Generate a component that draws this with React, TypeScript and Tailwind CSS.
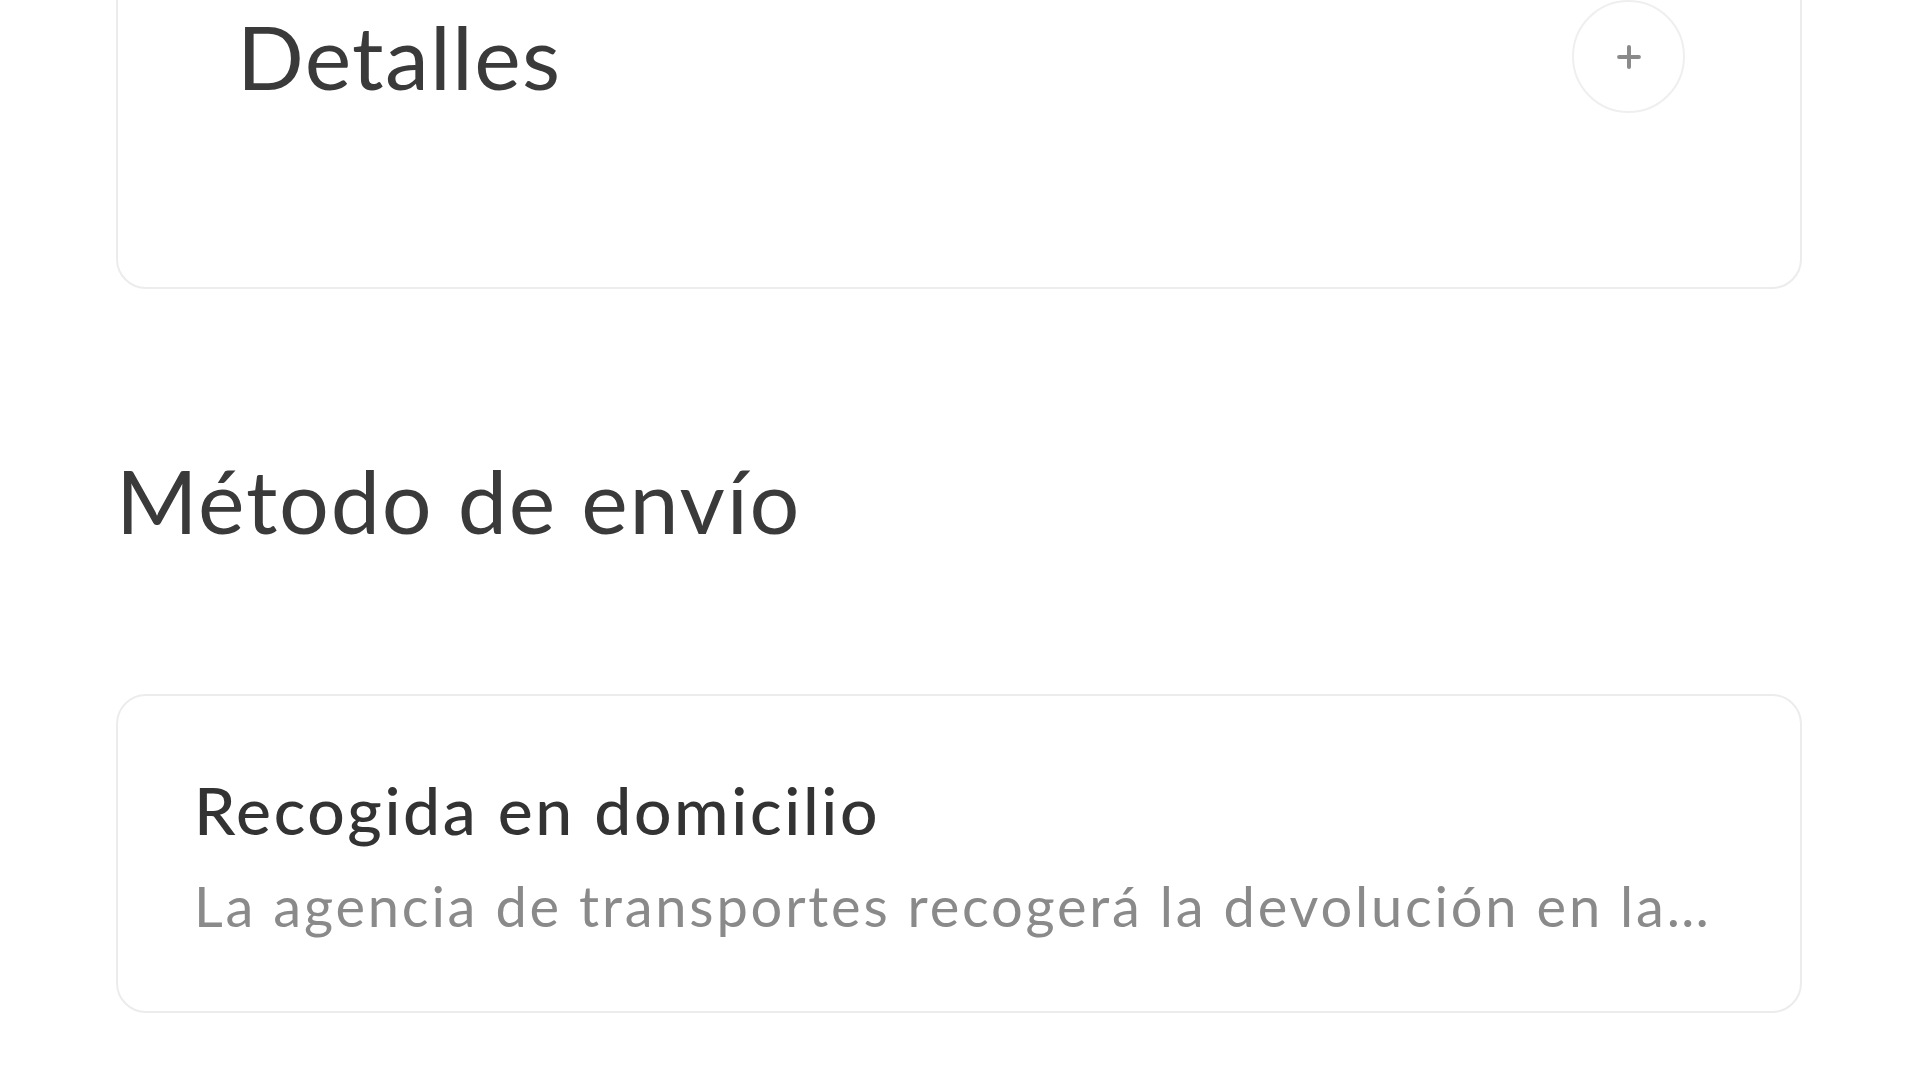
import { Plus } from 'lucide-react';

const font = { fontFamily: 'Lato, "Noto Sans", sans-serif' };

function DetailsCard() {
  return (
    <div className="-mt-[60px] pt-[58px] pb-[174px] rounded-[30px] border-2 border-[#ececec] bg-white">
      <div className="flex items-center justify-between pl-[119px] pr-[115px]">
        <span className="text-[88px] leading-[1.2] font-normal tracking-[0.015em] text-[#3a3a3a]">Detalles</span>
        <button className="w-[113px] h-[113px] rounded-full border-2 border-[#efefef] flex items-center justify-center bg-white">
          <Plus size={34} strokeWidth={2.8} color="#8a8a8a" />
        </button>
      </div>
    </div>
  );
}

function ShippingOption({ title, description }: { title: string; description: string }) {
  return (
    <div className="rounded-[30px] border-2 border-[#ececec] bg-white pt-[74px] pb-[72px] px-[76px]">
      <div className="text-[66px] leading-[1.2] font-medium tracking-[0.04em] text-[#333333]">{title}</div>
      <div className="mt-[23px] text-[56px] leading-[1.2] tracking-[0.05em] text-[#8a8a8a] truncate">{description}</div>
    </div>
  );
}

export default function App() {
  return (
    <div className="w-[1920px] h-[1089px] overflow-hidden bg-white pl-[116px] pr-[118px]" style={font}>
      <DetailsCard />

      <h2 className="mt-[159px] text-[88px] leading-[1.2] font-normal tracking-[0.02em] text-[#3a3a3a]">Método de envío</h2>

      <div className="mt-[140px]">
        <ShippingOption
          title="Recogida en domicilio"
          description="La agencia de transportes recogerá la devolución en la dirección que nos indiques"
        />
      </div>
    </div>
  );
}
